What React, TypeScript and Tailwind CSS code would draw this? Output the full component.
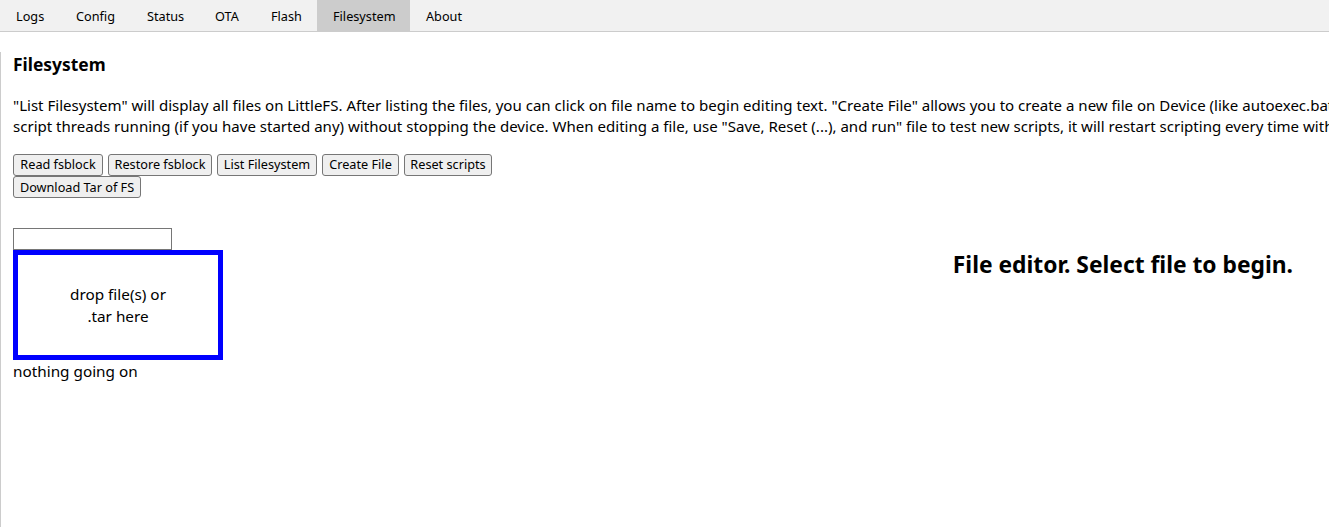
const tabs = [
  { name: 'Logs', w: 'w-[60px]' },
  { name: 'Config', w: 'w-[71px]' },
  { name: 'Status', w: 'w-[68px]' },
  { name: 'OTA', w: 'w-[56px]' },
  { name: 'Flash', w: 'w-[62px]' },
  { name: 'Filesystem', w: 'w-[93px]' },
  { name: 'About', w: 'w-[68px]' },
];

const buttons = [
  { label: 'Read fsblock', w: 'w-[90px]' },
  { label: 'Restore fsblock', w: 'w-[104px]' },
  { label: 'List Filesystem', w: 'w-[100px]' },
  { label: 'Create File', w: 'w-[77px]' },
  { label: 'Reset scripts', w: 'w-[88px]' },
];

function FsButton({ label, w }: { label: string; w: string }) {
  return (
    <button
      className={`${w} h-[22px] shrink-0 rounded-[3px] border border-[#767676] bg-[#efefef] text-[12.7px] leading-[19px] text-black hover:bg-[#e5e5e5]`}
    >
      {label}
    </button>
  );
}

export default function App() {
  const active = 'Filesystem';

  return (
    <div className="w-[1329px] h-[527px] overflow-hidden bg-white font-['Noto_Sans',sans-serif] text-black">
      {/* tab bar */}
      <div className="flex h-[32px] border-b border-[#cccccc] bg-[#f1f1f1]">
        {tabs.map((t) => (
          <div
            key={t.name}
            className={`${t.w} h-[31px] shrink-0 pl-[16px] pt-[1px] text-[12.7px] leading-[31px] ${
              t.name === active ? 'bg-[#cccccc]' : ''
            }`}
          >
            {t.name}
          </div>
        ))}
      </div>

      {/* tab content */}
      <div className="h-[495px] border-l border-[#cccccc] pl-[12px]">
        <h3 className="mt-[20px] h-[25px] text-[17.4px] font-bold leading-[25px]">Filesystem</h3>
        <p className="mt-[18px] whitespace-nowrap text-[15.05px] leading-[21.3px]">
          "List Filesystem" will display all files on LittleFS. After listing the files, you can click on file name to
          begin editing text. "Create File" allows you to create a new file on Device (like autoexec.bat). "Reset
          scripts" will stop all
          <br />
          script threads running (if you have started any) without stopping the device. When editing a file, use "Save,
          Reset (...), and run" file to test new scripts, it will restart scripting every time with new file.
        </p>

        <div className="mt-[16px] flex flex-col gap-[0.5px]">
          <div className="flex gap-[5px]">
            {buttons.map((b) => (
              <FsButton key={b.label} label={b.label} w={b.w} />
            ))}
          </div>
          <div className="flex">
            <FsButton label="Download Tar of FS" w="w-[128px]" />
          </div>
        </div>

        <div className="mt-[30px] flex">
          <div className="w-[210px] shrink-0">
            <input
              type="text"
              className="block h-[22px] w-[159px] border border-[#767676] bg-white px-1 text-[13px] outline-none"
            />
            <div className="flex h-[110px] w-[210px] items-center justify-center border-[5px] border-[#0000ff] text-center text-[15.3px] leading-[21.3px]">
              <div className="pt-[1px]">
                drop file(s) or
                <br />
                .tar here
              </div>
            </div>
            <div className="pt-[1px] text-[15.3px] leading-[21.3px]">nothing going on</div>
          </div>
          <div className="flex-1 pr-[36px] text-right">
            <h2 className="mt-[21px] text-[22.8px] font-bold leading-[32px]">File editor. Select file to begin.</h2>
          </div>
        </div>
      </div>
    </div>
  );
}
